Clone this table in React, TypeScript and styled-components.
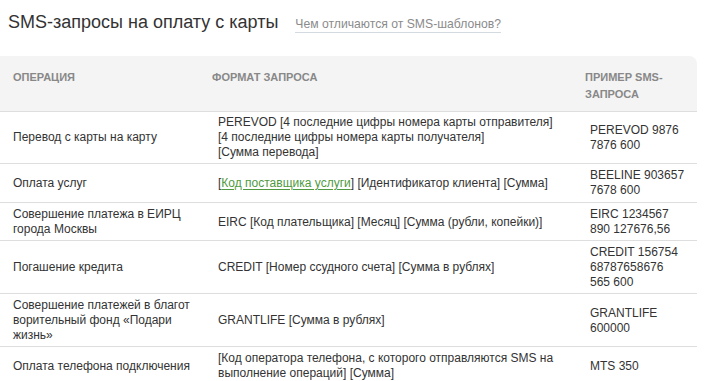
import styled, { createGlobalStyle } from 'styled-components';

type Operation = {
  title: React.ReactNode;
  format: React.ReactNode;
  example: string;
};

const CodeLink = styled.a`
  color: #4f9a3f;
  text-decoration: underline;
  text-underline-offset: 2px;
`;

const operations: Operation[] = [
  {
    title: 'Перевод с карты на карту',
    format: (
      <>
        PEREVOD [4 последние цифры номера карты отправителя]
        <br />
        [4 последние цифры номера карты получателя]
        <br />
        [Сумма перевода]
      </>
    ),
    example: 'PEREVOD 9876 7876 600'
  },
  {
    title: 'Оплата услуг',
    format: (
      <>
        [<CodeLink href="#">Код поставщика услуги</CodeLink>] [Идентификатор клиента] [Сумма]
      </>
    ),
    example: 'BEELINE 903657 7678 600'
  },
  {
    title: 'Совершение платежа в ЕИРЦ города Москвы',
    format: 'EIRC [Код плательщика] [Месяц] [Сумма (рубли, копейки)]',
    example: 'EIRC 1234567 890 127676,56'
  },
  {
    title: 'Погашение кредита',
    format: 'CREDIT [Номер ссудного счета] [Сумма в рублях]',
    example: 'CREDIT 156754 68787658676 565 600'
  },
  {
    title: (
      <>
        Совершение платежей в благот<wbr />ворительный фонд «Подари жизнь»
      </>
    ),
    format: 'GRANTLIFE [Сумма в рублях]',
    example: 'GRANTLIFE 600000'
  },
  {
    title: 'Оплата телефона подключения',
    format: '[Код оператора телефона, с которого отправляются SMS на выполнение операций] [Сумма]',
    example: 'MTS 350'
  }
];

const App = () => {
  return (
    <>
      <GlobalStyle />
      <Page>
        <Heading>
          <Title>SMS-запросы на оплату с карты</Title>
          <HelpLink href="#">Чем отличаются от SMS-шаблонов?</HelpLink>
        </Heading>
        <Table>
          <colgroup>
            <col style={{ width: 199 }} />
            <col style={{ width: 373 }} />
            <col style={{ width: 125 }} />
          </colgroup>
          <thead>
            <tr>
              <HeadCell>Операция</HeadCell>
              <HeadCell>Формат запроса</HeadCell>
              <HeadCell $last>Пример SMS-запроса</HeadCell>
            </tr>
          </thead>
          <tbody>
            {operations.map((op, index) => (
              <Row key={index}>
                <TitleCell>{op.title}</TitleCell>
                <FormatCell>{op.format}</FormatCell>
                <ExampleCell>{op.example}</ExampleCell>
              </Row>
            ))}
          </tbody>
        </Table>
      </Page>
    </>
  );
};

export default App;

const GlobalStyle = createGlobalStyle`
  body {
    margin: 0;
    background: #fff;
    font-family: 'Liberation Sans', Arial, sans-serif;
    color: #333;
  }
`;

const Page = styled.div`
  width: 704px;
  height: 381px;
  overflow: hidden;
`;

const Heading = styled.div`
  display: flex;
  align-items: baseline;
  gap: 17px;
  padding: 12px 0 0 8px;
  height: 56px;
  box-sizing: border-box;
`;

const Title = styled.h2`
  margin: 0;
  font-size: 18px;
  line-height: 20px;
  font-weight: normal;
  color: #333;
`;

const HelpLink = styled.a`
  font-size: 12.2px;
  line-height: 15px;
  color: #8b8b8b;
  text-decoration: none;
  border-bottom: 1px solid #d3dae2;
`;

const Table = styled.table`
  width: 697px;
  table-layout: fixed;
  border-collapse: separate;
  border-spacing: 0;
`;

const HeadCell = styled.th<{ $last?: boolean }>`
  background: #f4f4f4;
  height: 55px;
  box-sizing: border-box;
  padding: 13px 13px 0 13px;
  vertical-align: top;
  text-align: left;
  font-size: 11px;
  line-height: 17px;
  font-weight: bold;
  text-transform: uppercase;
  color: #888;
  border-top-right-radius: ${({ $last }) => ($last ? '8px' : '0')};
  padding-right: ${({ $last }) => ($last ? '24px' : '13px')};
`;

const Row = styled.tr`
  td {
    border-top: 1px solid #dedede;
    padding-top: 4px;
    padding-bottom: 3px;
    vertical-align: middle;
    font-size: 12px;
    line-height: 15px;
    color: #333;
  }

  &:nth-child(1) td {
    padding-top: 3px;
    padding-bottom: 3px;
  }

  &:nth-child(2) td {
    padding-top: 4px;
    padding-bottom: 4px;
  }
`;

const TitleCell = styled.td`
  && {
    padding-left: 13px;
    padding-right: 2px;
  }
`;

const FormatCell = styled.td`
  && {
    padding-left: 19px;
    padding-right: 6px;
  }
`;

const ExampleCell = styled.td`
  && {
    padding-left: 18px;
    padding-right: 12px;
  }
`;
